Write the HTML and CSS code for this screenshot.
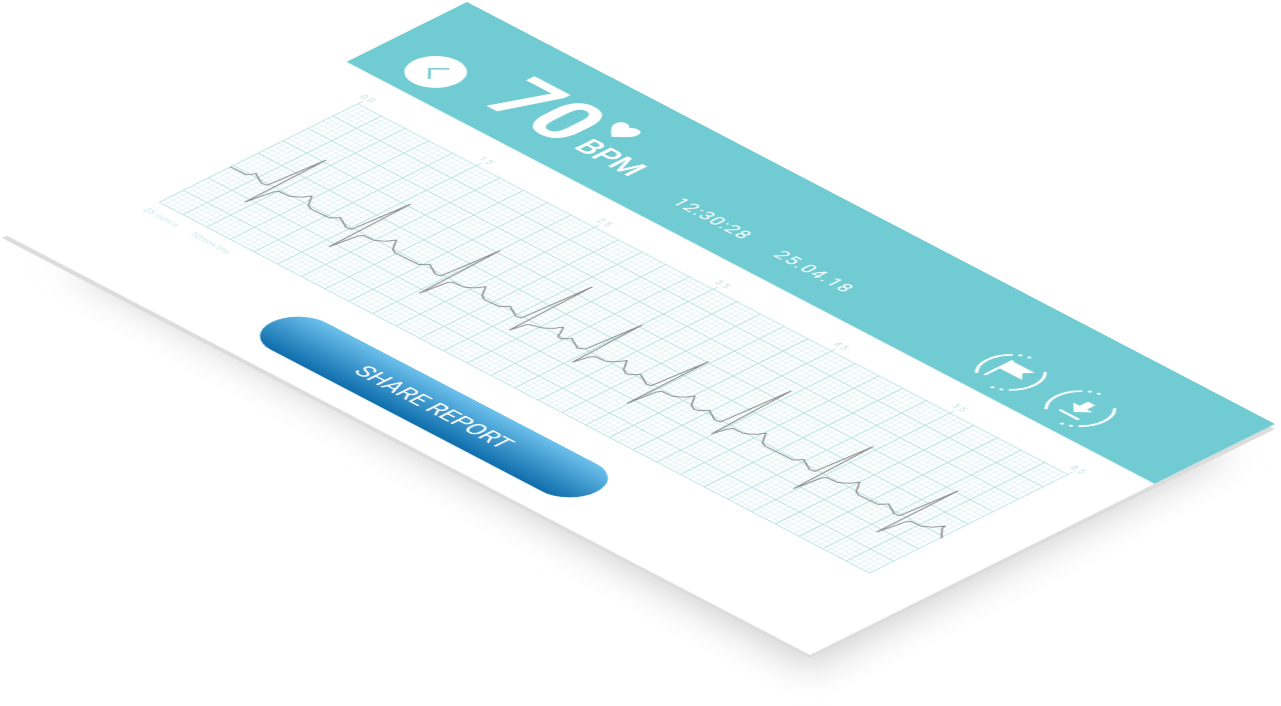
FILE: index.html
```html
<!DOCTYPE html>
<html lang="en">
<head>
    <meta charset="utf-8"/>
    <title>ECG report</title>
    <link rel="stylesheet" href="styles.css">
</head>
<body>
<!-- slab edge and soft shadow, drawn in page pixels -->
<svg class="slab" width="1281" height="706" viewBox="0 0 1281 706">
    <defs>
        <filter id="soft" x="-10%" y="-20%" width="120%" height="140%">
            <feGaussianBlur stdDeviation="18"/>
        </filter>
    </defs>
    <polygon class="slab-shadow" points="60,262 810,668 1235,450 600,250" filter="url(#soft)"/>
    <polygon class="slab-edge" points="2,238 810,658 1275,429 467,7"/>
</svg>

<div class="screen">
    <div class="head">
        <div class="back">
            <svg width="54" height="54" viewBox="0 0 54 54"><path d="M31.5 15 L19.5 27 L31.5 39" fill="none" stroke="#71cbd2" stroke-width="2.4"/></svg>
        </div>
        <div class="rate">70</div>
        <div class="unit">
            <svg class="heart" width="28" height="25" viewBox="0 0 28 25"><path d="M14 25 C6 18 0 13 0 7 C0 3 3 0 7 0 C10 0 12.500 1.500 14 4 C15.500 1.500 18 0 21 0 C25 0 28 3 28 7 C28 13 22 18 14 25 Z" fill="#fff"/></svg>
            <div class="bpm">BPM</div>
        </div>
        <div class="stamps">
            <span>12:30:28</span>
            <span>25.04.18</span>
        </div>
        <div class="actions">
            <svg width="68" height="68" viewBox="-34 -34 68 68">
                <path class="ring" d="M-21 21 A30 30 0 0 1 -21 -21 M21 -21 A30 30 0 0 1 21 21"/>
                <circle class="dot" cx="-15" cy="-26" r="1.800"/><circle class="dot" cx="-7" cy="-29" r="1.800"/>
                <circle class="dot" cx="15" cy="26" r="1.800"/><circle class="dot" cx="7" cy="29" r="1.800"/>
                <path class="ring" d="M-13 -14 V18"/>
                <path class="glyph" d="M-13 -14 H15 L8 -6 L16 2 H-13 Z"/>
            </svg>
            <svg width="68" height="68" viewBox="-34 -34 68 68">
                <path class="ring" d="M-21 21 A30 30 0 0 1 -21 -21 M21 -21 A30 30 0 0 1 21 21"/>
                <circle class="dot" cx="-15" cy="-26" r="1.800"/><circle class="dot" cx="-7" cy="-29" r="1.800"/>
                <circle class="dot" cx="15" cy="26" r="1.800"/><circle class="dot" cx="7" cy="29" r="1.800"/>
                <path class="ring" d="M-10 14 H11"/>
                <path class="glyph" d="M-4 -13 H5 V-3 H12 L0 8 L-12 -3 H-4 Z"/>
            </svg>
        </div>
    </div>

    <div class="chart">
        <div class="ticks">
            <div class="tick"><span>0.0</span></div>
            <div class="tick"><span>1.5</span></div>
            <div class="tick"><span>2.5</span></div>
            <div class="tick"><span>3.5</span></div>
            <div class="tick"><span>4.5</span></div>
            <div class="tick"><span>5.5</span></div>
            <div class="tick"><span>6.5</span></div>
        </div>
        <div class="grid">
            <svg width="880" height="240" viewBox="57 187 880 240">
                <polyline class="trace" points="57,341 69,340.600 77,340.500 81,333 88,337 96,341 102,340
                    107,274 109,373 114,344 116,340 129,339 137,333 142,325 145,329 151,338 157,341
                    179.500,340 185.500,333 191.500,336 200.500,341 206.500,340
                    211.500,274 214,374 218.500,344 220.500,340 233.500,339 241.500,333 246.500,325 249.500,329 255.500,338 261.500,341
                    290,340 296,333 302,336 311,341 317,340
                    322,274 325,373 329,344 331,340 344,339 352,333 357,325 360,329 366,338 372,341
                    389.600,340 395.600,333 401.600,336 410.600,341 416.600,340
                    421.600,260 424,361 428,344 431,342 441,339 448,333 453,325 456,329 461,339 466,340
                    472,333 478,336 487,341 493,337
                    498,274 501,360 505,344 508,340 520,339 527,333 532,325 535,329 541,338 547,341
                    551,340 557,333 563,336 572,341 577,340
                    582.600,276 584,375 588,344 590,340 603,339 611,333 616,325 619,329 625,338 631,341
                    636,340 642,333 648,336 657,341 663,340
                    668,260 672,359 676,344 678,340 691,339 699,333 704,325 707,329 713,338 719,341
                    753,340 759,333 765,336 774,341 780,340
                    785,275 788,373 792,344 794,340 807,339 815,333 820,325 823,329 829,338 835,341
                    858,340 864,333 870,336 879,341 885,340
                    890,275 891,373 896,344 898,340 911,339 919,333 925,324 926,329 938,341"/>
            </svg>
        </div>
        <div class="scales">
            <span>25 mm/s</span>
            <span>10mm/mv</span>
        </div>
    </div>

    <div class="share">SHARE REPORT</div>
</div>
</body>
</html>
```

FILE: styles.css
```css
* {
    padding: 0;
    margin: 0;
    box-sizing: border-box;
}
html, body {
    width: 1281px;
    height: 706px;
    overflow: hidden;
    background: #fff;
}
body {
    font-family: Roboto, "Liberation Sans", sans-serif;
    position: relative;
}
.slab {
    position: absolute;
    top: 0;
    left: 0;
}
.slab-shadow { fill: #d0d0d0; }
.slab-edge { fill: #dcdcdc; }

/* the flat 1000x560 screen, laid down by one affine matrix */
.screen {
    position: absolute;
    top: 0;
    left: 0;
    width: 1000px;
    height: 560px;
    background: #fff;
    transform-origin: 0 0;
    transform: matrix(.808, .422, -.8304, .4125, 467, 2);
    filter: blur(.35px);
}

.head {
    display: flex;
    height: 145px;
    padding-left: 39px;
    background: #71cbd2;
    color: #fff;
}
.back {
    width: 54px;
    height: 54px;
    margin-top: 75px;
    border-radius: 50%;
    background: #fff;
}
.back svg { display: block; }
.rate {
    margin: 38px 0 0 35px;
    font-size: 89px;
    line-height: 84px;
    font-weight: 700;
}
.unit {
    display: flex;
    flex-direction: column;
    margin: 45px 0 0 10px;
}
.heart {
    display: block;
    margin-left: -3px;
}
.bpm {
    margin-top: 9px;
    font-size: 33px;
    line-height: 33px;
    font-weight: 500;
}
.stamps {
    display: flex;
    gap: 36px;
    margin: 92px 0 0 56px;
    font-size: 20px;
    line-height: 24px;
    letter-spacing: 1.5px;
}
.actions {
    display: flex;
    gap: 18px;
    margin: 68px 102px 0 auto;
}
.actions svg {
    display: block;
    width: 68px;
    height: 68px;
}
.ring {
    fill: none;
    stroke: #fff;
    stroke-width: 3;
    stroke-linecap: round;
}
.dot, .glyph { fill: #fff; }

.chart {
    width: 880px;
    margin-left: 57px;
}
.ticks {
    display: flex;
    justify-content: space-between;
    align-items: flex-end;
    height: 42px;
}
.tick {
    display: flex;
    flex-direction: column;
    align-items: center;
    width: 1px;
    height: 17px;
    border-bottom: 5px solid #b2e1df;
    font-size: 10px;
    line-height: 12px;
    color: #c3dedd;
}
.tick span {
    white-space: nowrap;
}
.grid {
    width: 880px;
    height: 240px;
    background-color: #fff;
    background-image:
        linear-gradient(to right, #b2e1df 1.5px, transparent 1.5px),
        linear-gradient(to bottom, #b2e1df 1.5px, transparent 1.5px),
        linear-gradient(to right, #dff2f1 1px, transparent 1px),
        linear-gradient(to bottom, #dff2f1 1px, transparent 1px);
    background-size: 29.33px 30px, 29.33px 30px, 5.866px 6px, 5.866px 6px;
    border-right: 1px solid #b2e1df;
    border-bottom: 1px solid #b2e1df;
}
.grid svg {
    display: block;
    overflow: visible;
}
.trace {
    fill: none;
    stroke: #8f8f8f;
    stroke-width: 1.500;
    stroke-linejoin: round;
}
.scales {
    display: flex;
    gap: 17px;
    height: 22px;
    padding-top: 11px;
    font-size: 10px;
    line-height: 12px;
    color: #c9e9e8;
}

.share {
    display: flex;
    align-items: center;
    justify-content: center;
    width: 402px;
    height: 66px;
    margin: 17px 0 0 271px;
    border-radius: 33px;
    background: linear-gradient(to bottom, #6cc0ec, #0e6dab);
    color: #fff;
    font-size: 26px;
}
```
